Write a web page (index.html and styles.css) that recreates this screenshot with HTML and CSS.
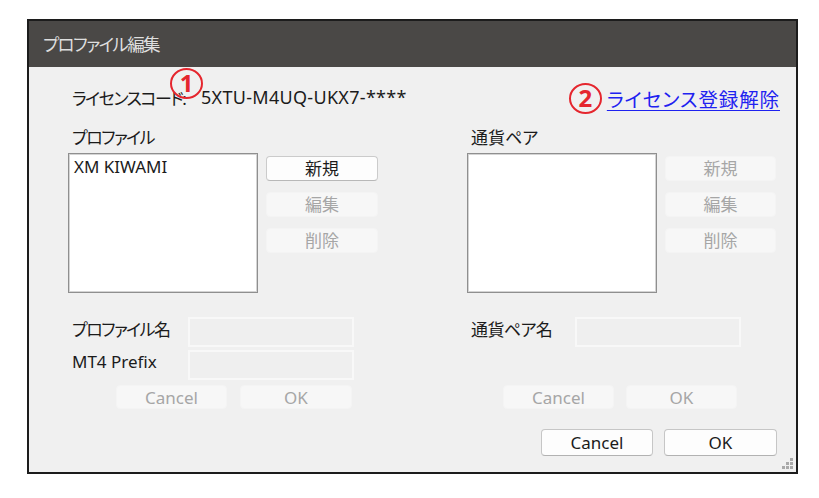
FILE: index.html
```html
<!DOCTYPE html>
<html lang="ja">
<head>
<meta charset="utf-8">
<title>プロファイル編集</title>
<link rel="stylesheet" href="styles.css">
</head>
<body>
<div class="window">
  <div class="titlebar">プロファイル編集</div>
  <div class="client">
    <div class="license-row">
      <div class="license-left">
        <span class="license-label kana">ライセンスコード:</span>
        <span class="license-code">5XTU-M4UQ-UKX7-****</span>
        <span class="marker marker-one">1</span>
      </div>
      <div class="license-right">
        <span class="marker marker-two">2</span>
        <a class="link" href="#">ライセンス登録解除</a>
      </div>
    </div>

    <div class="columns">
      <div class="column">
        <div class="group-label kana">プロファイル</div>
        <div class="list-area">
          <div class="listbox"><div class="list-item">XM KIWAMI</div></div>
          <div class="side-buttons">
            <button class="btn">新規</button>
            <button class="btn disabled">編集</button>
            <button class="btn disabled">削除</button>
          </div>
        </div>
        <div class="form-row first">
          <span class="field-label wide kana">プロファイル名</span>
          <span class="field"></span>
        </div>
        <div class="form-row">
          <span class="field-label wide">MT4 Prefix</span>
          <span class="field"></span>
        </div>
        <div class="sub-buttons left">
          <button class="btn disabled sub">Cancel</button>
          <button class="btn disabled sub ok">OK</button>
        </div>
      </div>

      <div class="column right">
        <div class="group-label">通貨ペア</div>
        <div class="list-area">
          <div class="listbox"></div>
          <div class="side-buttons">
            <button class="btn disabled">新規</button>
            <button class="btn disabled">編集</button>
            <button class="btn disabled">削除</button>
          </div>
        </div>
        <div class="form-row first">
          <span class="field-label narrow tight">通貨ペア名</span>
          <span class="field"></span>
        </div>
        <div class="form-row spacer"></div>
        <div class="sub-buttons right-sub">
          <button class="btn disabled sub">Cancel</button>
          <button class="btn disabled sub">OK</button>
        </div>
      </div>
    </div>

    <div class="footer">
      <button class="btn main">Cancel</button>
      <button class="btn main ok-main">OK</button>
    </div>

    <svg class="grip" width="14" height="14" viewBox="0 0 14 14">
      <rect x="10" y="1" width="3" height="3" fill="#a9a9a9"/>
      <rect x="6" y="5" width="3" height="3" fill="#a9a9a9"/>
      <rect x="10" y="5" width="3" height="3" fill="#a9a9a9"/>
      <rect x="2" y="9" width="3" height="3" fill="#a9a9a9"/>
      <rect x="6" y="9" width="3" height="3" fill="#a9a9a9"/>
      <rect x="10" y="9" width="3" height="3" fill="#a9a9a9"/>
    </svg>
  </div>
</div>
</body>
</html>
```

FILE: styles.css
```css
html, body {
  margin: 0;
  padding: 0;
  background: #ffffff;
}

body {
  font-family: "Noto Sans", "Noto Sans CJK JP", sans-serif;
  font-feature-settings: "palt";
  color: #1b1b1b;
  padding: 19px 0 0 27px;
}

.kana {
  letter-spacing: -1.5px;
}

.tight {
  letter-spacing: -0.6px;
}

.window {
  box-sizing: border-box;
  width: 771px;
  border: 2px solid #1c1c1c;
  background: #f0f0f0;
}

.titlebar {
  height: 46px;
  background: #4a4846;
  color: #dedede;
  font-size: 17.5px;
  line-height: 46px;
  padding-left: 14px;
  letter-spacing: -1.6px;
}

.client {
  position: relative;
  box-sizing: border-box;
  height: 405px;
  padding: 0 19px 0 39px;
}

.license-row {
  display: flex;
  justify-content: space-between;
  align-items: center;
  height: 30px;
  padding-top: 15px;
}

.license-left {
  position: relative;
  display: flex;
  align-items: center;
  padding-left: 4px;
}

.license-label {
  display: inline-block;
  width: 129px;
  font-size: 17px;
}

.license-code {
  font-size: 18px;
  letter-spacing: 0.3px;
}

.marker {
  box-sizing: border-box;
  display: inline-flex;
  justify-content: center;
  align-items: center;
  border: 2.5px solid #e5262e;
  border-radius: 50%;
  color: #e5262e;
  font-weight: 700;
  font-size: 24px;
  font-family: "Noto Sans", sans-serif;
  width: 33px;
  height: 31px;
  line-height: 1;
}

.marker-one {
  position: absolute;
  left: 102px;
  top: -17px;
}

.license-right {
  display: flex;
  align-items: center;
  margin-right: -3px;
  padding-top: 2px;
}

.marker-two {
  margin-right: 5px;
}

.link {
  color: #1e22f0;
  font-size: 19.5px;
  text-decoration: underline;
  text-underline-offset: 3px;
  letter-spacing: 0.9px;
}

.columns {
  display: flex;
  gap: 89px;
}

.column {
  width: 310px;
}

.group-label {
  margin-top: 16px;
  height: 20px;
  line-height: 20px;
  font-size: 17px;
  padding-left: 4px;
}

.list-area {
  display: flex;
  gap: 8px;
  margin-top: 5px;
}

.listbox {
  box-sizing: border-box;
  width: 190px;
  height: 140px;
  background: #ffffff;
  border: 1px solid #8f8f8f;
  box-shadow: inset 0 0 0 1px #d4d4d4;
  padding: 1px 5px;
}

.list-item {
  font-size: 17px;
  line-height: 24px;
}

.side-buttons {
  display: flex;
  flex-direction: column;
  gap: 11px;
  padding-top: 3px;
}

.btn {
  box-sizing: border-box;
  width: 112px;
  height: 25px;
  padding: 0;
  margin: 0;
  border: 1px solid #cbcbcb;
  border-bottom-color: #b8b8b8;
  border-radius: 4px;
  background: #fdfdfd;
  color: #1b1b1b;
  font-family: "Noto Sans", "Noto Sans CJK JP", sans-serif;
  font-feature-settings: "palt";
  font-size: 17px;
  line-height: 22px;
}

.btn.disabled {
  background: #f7f7f7;
  border-color: #f4f4f4;
  color: #a6a6a6;
}

.column.right .side-buttons .btn {
  width: 111px;
}

.form-row {
  display: flex;
  align-items: center;
  height: 30px;
  margin-top: 3px;
}

.form-row.first {
  margin-top: 24px;
}

.field-label {
  box-sizing: border-box;
  padding-left: 4px;
  padding-bottom: 7px;
  font-size: 17px;
}

.field-label.wide {
  width: 120px;
}

.field-label.narrow {
  width: 108px;
}

.field {
  box-sizing: border-box;
  width: 166px;
  height: 30px;
  background: #efefef;
  border: 2px solid #f8f8f8;
}

.sub-buttons {
  display: flex;
  margin-top: 5px;
}

.sub-buttons.left {
  margin-left: 48px;
  gap: 13px;
}

.sub-buttons.right-sub {
  margin-left: 36px;
  gap: 12px;
}

.btn.sub {
  width: 111px;
  height: 24px;
  line-height: 23px;
}

.btn.sub.ok {
  width: 112px;
}

.footer {
  display: flex;
  justify-content: flex-end;
  gap: 11px;
  margin-top: 20px;
}

.btn.main {
  width: 112px;
  height: 27px;
  line-height: 25px;
  border-color: #c6c6c6;
  border-bottom-color: #b2b2b2;
}

.btn.ok-main {
  width: 113px;
}

.grip {
  position: absolute;
  right: 2px;
  bottom: 1px;
}
```
